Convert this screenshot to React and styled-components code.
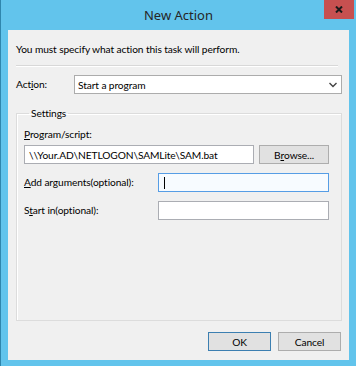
import React from 'react';
import styled, { createGlobalStyle } from 'styled-components';

const GlobalStyle = createGlobalStyle`
  html, body {
    margin: 0;
    padding: 0;
    background: #62c4ec;
  }
  body {
    font-family: Lato, 'Noto Sans', 'Liberation Sans', sans-serif;
    font-size: 10.2px;
    letter-spacing: -0.1px;
    color: #000;
  }
`;

const Window = styled.div`
  width: 356px;
  height: 366px;
  box-sizing: border-box;
  background: #62c4ec;
  border-left: 1px solid #2f86ad;
  display: flex;
  flex-direction: column;
`;

const TitleBar = styled.div`
  height: 30px;
  display: grid;
  grid-template-columns: 1fr auto 1fr;
  align-items: start;
`;

const Title = styled.div`
  grid-column: 2;
  margin-top: 6px;
  font-family: 'Noto Sans', sans-serif;
  font-size: 13px;
  letter-spacing: 0;
  color: #262626;
`;

const CloseButton = styled.button`
  grid-column: 3;
  justify-self: end;
  width: 30px;
  height: 19px;
  margin-right: 2px;
  border: none;
  padding: 0;
  background: #c75050;
  display: flex;
  align-items: center;
  justify-content: center;
  cursor: pointer;
`;

const Content = styled.div`
  flex: 1;
  margin: 0 7px 6px 7px;
  background: #f0f0f0;
  display: flex;
  flex-direction: column;
  padding: 12px 7px 9px 8px;
  box-sizing: border-box;
`;

const Intro = styled.div`
  line-height: 15px;
`;

const Separator = styled.div`
  margin: 8px 4px 0 0;
  border-top: 1px solid #d8d8d8;
  border-bottom: 1px solid #ffffff;
`;

const ActionRow = styled.div`
  display: flex;
  align-items: center;
  margin-top: 8px;
`;

const RowLabel = styled.label`
  width: ${p => p.$width || 'auto'};
  flex-shrink: 0;
  line-height: 15px;
`;

const Combo = styled.div`
  flex: 1;
  height: 19px;
  box-sizing: border-box;
  border: 1px solid #acacac;
  background: #fff;
  display: flex;
  align-items: center;
  justify-content: space-between;
  padding: 0 4px 0 3px;
`;

const Group = styled.fieldset`
  flex: 1;
  margin: 12px 0 0 0;
  padding: 6px 12px 0 7px;
  border: 1px solid #dcdcdc;
  box-shadow: inset 1px 1px 0 #fff;
  display: flex;
  flex-direction: column;
  min-width: 0;
`;

const Legend = styled.legend`
  padding: 0 2px;
  margin-left: 5px;
  line-height: 15px;
`;

const FieldLabel = styled.label`
  line-height: 15px;
`;

const ScriptRow = styled.div`
  display: flex;
  gap: 5px;
  margin-top: 3px;
`;

const TextBox = styled.div`
  height: 19px;
  box-sizing: border-box;
  border: 1px solid ${p => (p.$focused ? '#569de5' : '#abadb3')};
  background: ${p => (p.$focused ? '#f7fbff' : '#fff')};
  display: flex;
  align-items: center;
  padding: 0 4px;
  flex: 1;
  white-space: nowrap;
  overflow: hidden;

  ${p => p.$focused && `
    &::before {
      content: '';
      width: 1px;
      height: 12px;
      margin-left: 1px;
      background: #000;
    }
  `}
`;

const Button = styled.button`
  width: ${p => p.$width || '63px'};
  height: 19px;
  box-sizing: border-box;
  border: 1px solid ${p => (p.$primary ? '#3c7fb1' : '#adadad')};
  background: #e1e1e1;
  font-family: inherit;
  font-size: inherit;
  letter-spacing: inherit;
  color: #000;
  padding: 0;
  display: flex;
  align-items: center;
  justify-content: center;
  cursor: pointer;
`;

const FieldRow = styled.div`
  display: flex;
  align-items: center;
  margin-top: 9px;
`;

const Footer = styled.div`
  display: flex;
  justify-content: flex-end;
  gap: 7px;
  margin-top: 11px;
  padding-right: 1px;
`;

const U = styled.span`
  text-decoration: underline;
`;

function App() {
  return (
    <>
      <GlobalStyle />
      <Window>
        <TitleBar>
          <Title>New Action</Title>
          <CloseButton aria-label="Close">
            <svg width="8" height="7" viewBox="0 0 8 7">
              <path d="M1 0.5 L7 6.5 M7 0.5 L1 6.5" stroke="#1a1a1a" strokeWidth="2" />
            </svg>
          </CloseButton>
        </TitleBar>
        <Content>
          <Intro>You must specify what action this task will perform.</Intro>
          <Separator />
          <ActionRow>
            <RowLabel $width="58px">Act<U>i</U>on:</RowLabel>
            <Combo>
              <span>Start a program</span>
              <svg width="8" height="6" viewBox="0 0 8 6">
                <path d="M0.5 1 L4 4.5 L7.5 1" stroke="#444" strokeWidth="1.4" fill="none" />
              </svg>
            </Combo>
          </ActionRow>
          <Group>
            <Legend>Settings</Legend>
            <FieldLabel><U>P</U>rogram/script:</FieldLabel>
            <ScriptRow>
              <TextBox>\\Your.AD\NETLOGON\SAMLite\SAM.bat</TextBox>
              <Button $width="70px">B<U>r</U>owse...</Button>
            </ScriptRow>
            <FieldRow>
              <RowLabel $width="134px"><U>A</U>dd arguments(optional):</RowLabel>
              <TextBox $focused />
            </FieldRow>
            <FieldRow>
              <RowLabel $width="134px">S<U>t</U>art in(optional):</RowLabel>
              <TextBox />
            </FieldRow>
          </Group>
          <Footer>
            <Button $primary>OK</Button>
            <Button>Cancel</Button>
          </Footer>
        </Content>
      </Window>
    </>
  );
}

export default App;
